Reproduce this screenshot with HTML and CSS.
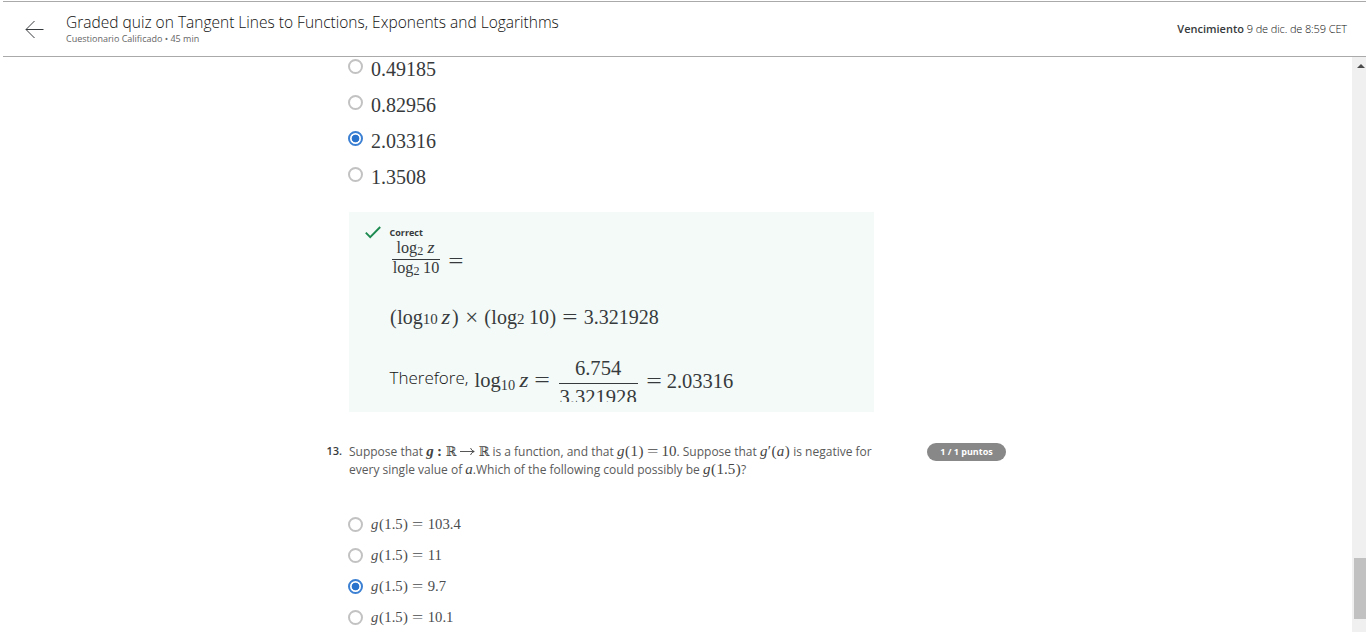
FILE: index.html
```html
<!DOCTYPE html>
<html lang="es">
<head>
<meta charset="utf-8">
<title>Graded quiz</title>
<link rel="stylesheet" href="styles.css">
</head>
<body>
<header class="header">
  <svg class="back" width="19" height="19" viewBox="0 0 19 19" fill="none" stroke="#373a3c"><path d="M18.5 9.5H1M9.5 1L1 9.5L9.5 18"/></svg>
  <div class="titles">
    <h1 class="title">Graded quiz on Tangent Lines to Functions, Exponents and Logarithms</h1>
    <p class="subtitle">Cuestionario Calificado • 45 min</p>
  </div>
  <p class="due"><b>Vencimiento</b> 9 de dic. de 8:59 CET</p>
</header>
<div class="viewport">
  <main class="content">
    <div class="choices large">
      <label class="choice"><i class="radio"></i><span class="math">0.49185</span></label>
      <label class="choice"><i class="radio"></i><span class="math">0.82956</span></label>
      <label class="choice"><i class="radio on"></i><span class="math">2.03316</span></label>
      <label class="choice"><i class="radio"></i><span class="math">1.3508</span></label>
    </div>
    <section class="feedback">
      <div class="verdict"><svg width="16" height="13" viewBox="0 0 16 13" fill="none" stroke="#1d8a50" stroke-width="1.9"><path d="M.8 6.6L5.2 11.2L15.2 1"/></svg><b>Correct</b></div>
      <div class="line ratio">
        <span class="frac math"><span class="num">log<sub>2</sub><i class="z">z</i></span><span class="den">log<sub>2</sub><span class="arg">10</span></span></span>
        <span class="math eq">=</span>
      </div>
      <div class="line product math"><span class="par">(</span>log<sub>10</sub><i class="z">z</i><span class="par">)</span><span class="times">×</span><span class="par">(</span>log<sub>2</sub><span class="arg">10</span><span class="par">)</span><span class="eq">=</span>3.321928</div>
      <div class="line result">
        <span class="word">Therefore,</span>
        <span class="math lhs">log<sub>10</sub><i class="z">z</i><span class="eq">=</span></span>
        <span class="frac math big"><span class="num">6.754</span><span class="den">3.321928</span></span>
        <span class="math rhs"><span class="eq">=</span>2.03316</span>
      </div>
    </section>
    <section class="question">
      <b class="number">13.</b>
      <div class="prompt">
        <p class="q1">Suppose that <span class="math"><b><i>g</i></b><b class="colon">:</b><span class="set">ℝ</span><svg class="arrow" width="15" height="9" viewBox="0 0 15 9" fill="none" stroke="currentColor" stroke-width=".9"><path d="M0 4.5H14M10.5 1Q11.5 3.8 14.3 4.5Q11.5 5.2 10.5 8"/></svg><span class="set">ℝ</span></span> is a function, and that <span class="math"><i class="g">g</i><span class="par">(</span>1<span class="par">)</span><span class="eq">=</span>10</span>. Suppose that <span class="math"><i class="g">g</i><span class="prime">′</span><span class="par">(</span><i>a</i><span class="par">)</span></span> is negative for</p>
        <p class="q2">every single value of <span class="math"><i>a</i></span>.Which of the following could possibly be <span class="math"><i class="g">g</i><span class="par">(</span>1.5<span class="par">)</span></span>?</p>
      </div>
      <span class="points">1 / 1 puntos</span>
    </section>
    <div class="choices small">
      <label class="choice"><i class="radio"></i><span class="math"><i class="g">g</i><span class="par">(</span>1.5<span class="par">)</span><span class="eq">=</span>103.4</span></label>
      <label class="choice"><i class="radio"></i><span class="math"><i class="g">g</i><span class="par">(</span>1.5<span class="par">)</span><span class="eq">=</span>11</span></label>
      <label class="choice"><i class="radio on"></i><span class="math"><i class="g">g</i><span class="par">(</span>1.5<span class="par">)</span><span class="eq">=</span>9.7</span></label>
      <label class="choice"><i class="radio"></i><span class="math"><i class="g">g</i><span class="par">(</span>1.5<span class="par">)</span><span class="eq">=</span>10.1</span></label>
    </div>
  </main>
  <div class="scrollbar"><span class="up"></span><span class="thumb"></span></div>
</div>
</body>
</html>
```
FILE: styles.css
```css
* { box-sizing: border-box; }
body { margin: 0; height: 632px; overflow: hidden; background: #fff; color: #373a3c; font-family: "Open Sans", sans-serif; }
h1, p { margin: 0; }
.header { height: 56px; margin: 1px 0 0 3px; border-top: 1px solid #aaa; border-bottom: 1px solid #aaa; display: flex; align-items: flex-start; padding: 0 19px 0 22px; }
.back { margin-top: 18px; }
.titles { margin-left: 22px; flex: 1; }
.title { font-size: 15.53px; font-weight: 350; color: #111; line-height: 20px; margin-top: 10px; margin-bottom: 1px; white-space: nowrap; }
.subtitle { font-size: 9px; line-height: 12px; color: #666; white-space: nowrap; }
.due { font-size: 11px; font-weight: 350; color: #111; line-height: 16px; margin-top: 19px; white-space: nowrap; letter-spacing: -.12px; }
.due b { font-weight: 600; color: #373a3c; letter-spacing: 0; }
.viewport { height: 575px; display: flex; overflow: hidden; }
.content { flex: 1; padding-left: 349px; }
.scrollbar { width: 14px; background: #f0f0f0; display: flex; flex-direction: column; align-items: flex-end; justify-content: space-between; padding: 7px 0 13px; }
.up { border: 4px solid transparent; border-top: 0; border-bottom: 4px solid #4c4c4c; margin-right: 1px; }
.thumb { width: 12px; height: 61px; background: #c1c1c1; }

.choice { display: flex; align-items: center; }
.radio { width: 15px; height: 15px; flex: none; border: 2px solid #c2c2c2; border-radius: 50%; margin: 0 8px 0 -1px; }
.radio.on { border-color: #3b80d2; background: radial-gradient(circle, #2a73cc 3.5px, transparent 4.2px); }
.large { margin-top: -9px; font-size: 20px; }
.large .choice { height: 36px; }
.large .math { padding-top: 6px; }
.small { font-size: 14.7px; margin-top: 30px; }
.small .choice { height: 31px; }
.small .math { color: #4a4c4e; }

.math { font-family: "Liberation Serif", serif; white-space: nowrap; }
.math sub { font-size: .75em; line-height: 0; vertical-align: -.2em; margin-right: .06em; }
.eq, .times { display: inline-block; width: .778em; text-align: center; margin: 0 .27em; transform: scaleX(1.35); }
.times { transform: scale(1.15); }
.par { display: inline-block; width: .389em; text-align: center; }
.z, .arg { margin-left: .18em; }
.z { display: inline-block; width: .46em; transform: scaleX(1.12); }
.g { margin-right: .02em; }

.feedback { width: 525px; height: 200px; margin-top: 20px; background: #f3faf8; overflow: hidden; }
.verdict { display: flex; height: 28px; padding: 14px 0 0 16px; font-size: 9px; line-height: 14px; }
.verdict b { margin-left: 8.5px; font-weight: 700; }
.line { display: flex; padding-left: 40.5px; }
.ratio { height: 63px; }
.ratio .eq { font-size: 20px; line-height: 20px; margin: 11px 0 0 7.5px; }
.frac { display: flex; flex-direction: column; align-items: center; font-size: 16.2px; }
.num { border-bottom: 1px solid currentColor; height: 20px; line-height: 17px; padding: 0 5px; }
.den { line-height: 17px; padding: 0 1px; }
.ratio .frac { margin-left: 2px; }
.ratio .num .z { margin-left: .25em; }
.product { height: 54px; font-size: 20px; line-height: 28px; align-items: baseline; }
.product .times { margin: 0 .22em; }
.product .eq { margin-right: .31em; }
.result { font-size: 20.5px; height: 49px; }
.word { font-size: 17px; font-weight: 350; color: #111; line-height: 22px; margin-top: 10px; width: 85px; white-space: nowrap; }
.lhs { line-height: 24px; margin-top: 11px; }
.lhs sub { font-size: .7em; }
.big { font-size: 20.6px; height: 45px; overflow: hidden; }
.big .num { width: 79px; padding: 0; text-align: center; height: 27px; flex: none; line-height: 23px; }
.big .den { line-height: 26px; flex: none; }
.rhs { line-height: 24px; margin-top: 12px; }
.lhs .eq { margin: 0 9px 0 4.5px; }
.rhs .eq { margin: 0 5px 0 8px; }

.question { display: flex; align-items: flex-start; margin: 30px 0 0 -22.5px; font-size: 12px; }
.number { width: 22.5px; font-size: 11px; line-height: 18px; font-weight: 600; }
.prompt { width: 578px; line-height: 18px; white-space: nowrap; font-weight: 400; color: #5a5a5a; height: 37px; padding-top: 1px; }
.prompt p { height: 18px; }
.prompt .math { font-size: 15px; line-height: 0; font-weight: 400; color: #444; }
.prompt .math .eq { margin: 0 .2em; }
.colon { margin: 0 .23em; }
.set { font-family: "DejaVu Serif", "DejaVu Sans", serif; font-size: 13px; }
.arrow { margin: 0 3.6px; }
.points { width: 79px; height: 18px; margin-top: 1px; border-radius: 9px; background: #888; color: #fff; font-size: 9px; font-weight: 700; line-height: 18px; text-align: center; }
```
